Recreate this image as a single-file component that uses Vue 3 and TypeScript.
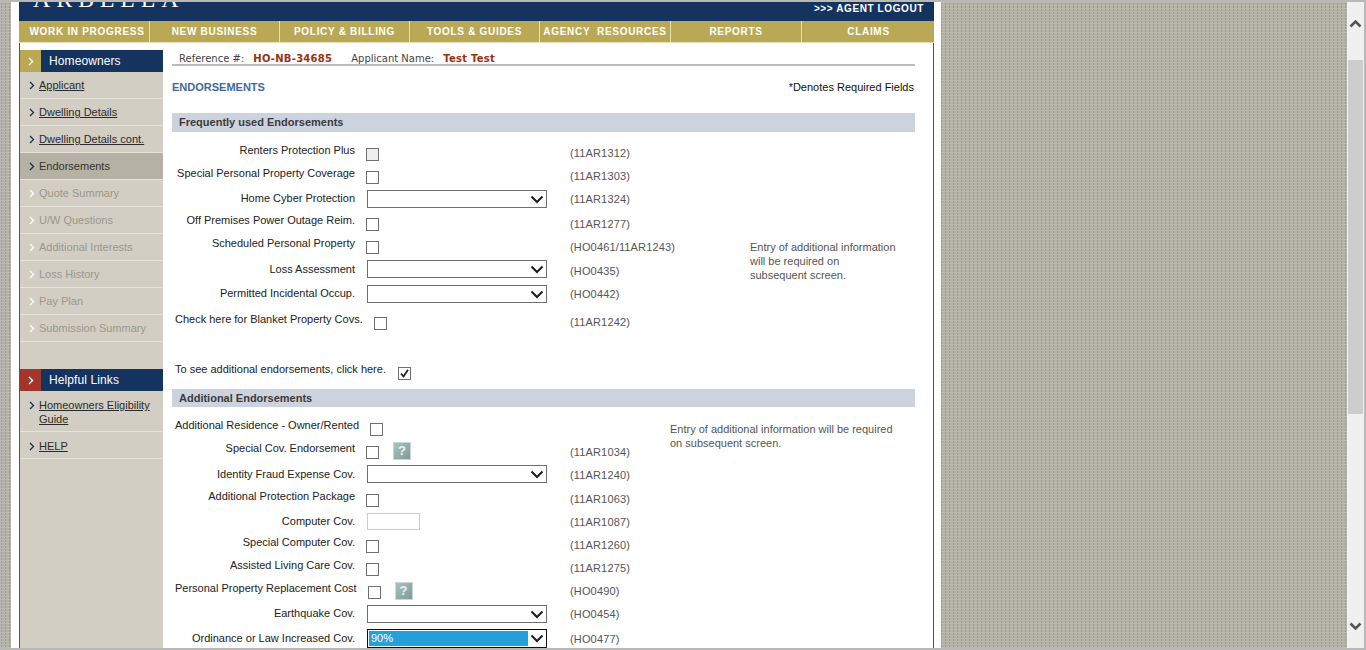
<script setup lang="ts">
interface Row {
  label: string
  type: 'check' | 'select' | 'text' | 'none'
  code?: string
  h: number
  ctrlTop?: number
  codeTop?: number
  wide?: boolean
  help?: boolean
  disabled?: boolean
  checked?: boolean
  value?: string
  focus?: boolean
}

const navItems = ['WORK IN PROGRESS', 'NEW BUSINESS', 'POLICY & BILLING', 'TOOLS & GUIDES', 'AGENCY  RESOURCES', 'REPORTS', 'CLAIMS']

const sideItems = [
  { text: 'Applicant', link: true },
  { text: 'Dwelling Details', link: true },
  { text: 'Dwelling Details cont.', link: true },
  { text: 'Endorsements', active: true },
  { text: 'Quote Summary', off: true },
  { text: 'U/W Questions', off: true },
  { text: 'Additional Interests', off: true },
  { text: 'Loss History', off: true },
  { text: 'Pay Plan', off: true },
  { text: 'Submission Summary', off: true }
]

const frequent: Row[] = [
  { label: 'Renters Protection Plus', type: 'check', code: '(11AR1312)', h: 23, codeTop: 3, disabled: true },
  { label: 'Special Personal Property Coverage', type: 'check', code: '(11AR1303)', h: 25, codeTop: 3 },
  { label: 'Home Cyber Protection', type: 'select', code: '(11AR1324)', h: 22, ctrlTop: -1, codeTop: 1 },
  { label: 'Off Premises Power Outage Reim.', type: 'check', code: '(11AR1277)', h: 23, codeTop: 4 },
  { label: 'Scheduled Personal Property', type: 'check', code: '(HO0461/11AR1243)', h: 26, codeTop: 4 },
  { label: 'Loss Assessment', type: 'select', code: '(HO0435)', h: 24, ctrlTop: -2, codeTop: 2 },
  { label: 'Permitted Incidental Occup.', type: 'select', code: '(HO0442)', h: 26, ctrlTop: -1, codeTop: 1 },
  { label: 'Check here for Blanket Property Covs.', type: 'check', code: '(11AR1242)', h: 50, codeTop: 3, wide: true },
  { label: 'To see additional endorsements, click here.', type: 'check', h: 27, wide: true, checked: true }
]

const additional: Row[] = [
  { label: 'Additional Residence - Owner/Rented', type: 'check', h: 23, wide: true },
  { label: 'Special Cov. Endorsement', type: 'check', code: '(11AR1034)', h: 26, codeTop: 4, help: true },
  { label: 'Identity Fraud Expense Cov.', type: 'select', code: '(11AR1240)', h: 22, ctrlTop: -2, codeTop: 1 },
  { label: 'Additional Protection Package', type: 'check', code: '(11AR1063)', h: 25, codeTop: 3 },
  { label: 'Computer Cov.', type: 'text', code: '(11AR1087)', h: 21, ctrlTop: -1, codeTop: 1 },
  { label: 'Special Computer Cov.', type: 'check', code: '(11AR1260)', h: 23, codeTop: 3 },
  { label: 'Assisted Living Care Cov.', type: 'check', code: '(11AR1275)', h: 23, codeTop: 3 },
  { label: 'Personal Property Replacement Cost', type: 'check', code: '(HO0490)', h: 25, codeTop: 3, wide: true, help: true },
  { label: 'Earthquake Cov.', type: 'select', code: '(HO0454)', h: 25, ctrlTop: -1, codeTop: 1 },
  { label: 'Ordinance or Law Increased Cov.', type: 'select', code: '(HO0477)', h: 25, ctrlTop: -2, codeTop: 1, value: '90%', focus: true }
]

const sections = [
  { title: 'Frequently used Endorsements', rows: frequent, cls: 'freq', note: 'Entry of additional information will be required on subsequent screen.' },
  { title: 'Additional Endorsements', rows: additional, cls: 'addl', note: 'Entry of additional information will be required on subsequent screen.' }
]
</script>

<template>
  <div class="frame">
    <div class="viewport">
      <div class="page">
        <header class="masthead">
          <div class="logo">ARBELLA</div>
          <a class="logout">&gt;&gt;&gt; AGENT LOGOUT</a>
        </header>
        <nav class="topnav">
          <a v-for="n in navItems" :key="n">{{ n }}</a>
        </nav>
        <div class="body">
          <aside class="side">
            <div class="side-head">
              <span class="tab gold">
                <svg width="6" height="9" viewBox="0 0 6 9"><path d="M1 1l3.5 3.5L1 8" fill="none" stroke="#fff" stroke-width="1.4" /></svg>
              </span>
              <span class="head-text">Homeowners</span>
            </div>
            <ul>
              <li v-for="s in sideItems" :key="s.text" :class="{ active: s.active, off: s.off }">
                <svg width="6" height="9" viewBox="0 0 6 9"><path d="M1 1l3.5 3.5L1 8" fill="none" :stroke="s.off ? '#fff' : '#14305c'" stroke-width="1.3" /></svg>
                <a :class="{ link: s.link }">{{ s.text }}</a>
              </li>
            </ul>
            <div class="side-head second">
              <span class="tab red">
                <svg width="6" height="9" viewBox="0 0 6 9"><path d="M1 1l3.5 3.5L1 8" fill="none" stroke="#fff" stroke-width="1.4" /></svg>
              </span>
              <span class="head-text">Helpful Links</span>
            </div>
            <ul class="help-links">
              <li>
                <svg width="6" height="9" viewBox="0 0 6 9"><path d="M1 1l3.5 3.5L1 8" fill="none" stroke="#14305c" stroke-width="1.3" /></svg>
                <a class="link">Homeowners Eligibility Guide</a>
              </li>
              <li>
                <svg width="6" height="9" viewBox="0 0 6 9"><path d="M1 1l3.5 3.5L1 8" fill="none" stroke="#14305c" stroke-width="1.3" /></svg>
                <a class="link">HELP</a>
              </li>
            </ul>
          </aside>

          <main class="main">
            <div class="refbar">
              <span>Reference #:</span><b class="ref">HO-NB-34685</b>
              <span class="app">Applicant Name:</span><b class="ref">Test Test</b>
            </div>
            <div class="title-row">
              <h1>ENDORSEMENTS</h1>
              <span class="req">*Denotes Required Fields</span>
            </div>

            <section v-for="sec in sections" :key="sec.title" :class="sec.cls">
              <h2>{{ sec.title }}</h2>
              <div class="sec-body">
                <div class="rows">
                  <div v-for="r in sec.rows" :key="r.label" class="row" :style="{ height: r.h + 'px' }">
                    <div class="cell">
                      <label :class="{ wide: r.wide, far: r.checked }">{{ r.label }}</label>
                      <div class="ctrl" :style="r.ctrlTop !== undefined ? { marginTop: r.ctrlTop + 'px' } : undefined">
                        <span v-if="r.type === 'check'" class="cb" :class="{ dis: r.disabled }">
                          <svg v-if="r.checked" width="11" height="11" viewBox="0 0 11 11"><path d="M2 5.5l2.5 3L9 1.8" fill="none" stroke="#222" stroke-width="1.8" /></svg>
                        </span>
                        <div v-else-if="r.type === 'select'" class="sel" :class="{ focus: r.focus }">
                          <span class="val">{{ r.value }}</span>
                          <svg width="14" height="9" viewBox="0 0 14 9"><path d="M1.5 1.5L7 7l5.5-5.5" fill="none" stroke="#1a1a2a" stroke-width="2" /></svg>
                        </div>
                        <span v-else-if="r.type === 'text'" class="txt"></span>
                        <span v-if="r.help" class="q">?</span>
                      </div>
                    </div>
                    <span v-if="r.code" class="code" :style="{ paddingTop: (r.codeTop ?? 0) + 'px' }">{{ r.code }}</span>
                  </div>
                </div>
                <p class="note">{{ sec.note }}</p>
              </div>
            </section>
          </main>
        </div>
      </div>
    </div>
    <div class="scrollbar">
      <svg class="arrow up" width="13" height="9" viewBox="0 0 13 9"><path d="M1.5 7.5l5-5 5 5" fill="none" stroke="#555" stroke-width="2.6" /></svg>
      <div class="thumb"></div>
      <svg class="arrow down" width="13" height="9" viewBox="0 0 13 9"><path d="M1.5 1.5l5 5 5-5" fill="none" stroke="#555" stroke-width="2.6" /></svg>
    </div>
  </div>
</template>

<style>
html,
body {
  margin: 0;
  overflow: hidden;
}
</style>

<style scoped>
.frame {
  box-sizing: border-box;
  width: 1366px;
  height: 650px;
  display: flex;
  border-top: 2px solid #b8b8b8;
  border-bottom: 2px solid #b8b8b8;
  border-left: 1px solid #b8b8b8;
  border-right: 2px solid #b8b8b8;
  overflow: hidden;
  font-family: "Liberation Sans", Arial, sans-serif;
  font-size: 11px;
  color: #222;
}

.viewport {
  flex: 1;
  overflow: hidden;
  background-color: #b3b3a7;
  background-image:
    repeating-linear-gradient(0deg, #b9b9ad 0 1px, transparent 1px 3px),
    repeating-linear-gradient(90deg, #9a9a90 0 1px, transparent 1px 4px);
}

.page {
  box-sizing: border-box;
  width: 930px;
  margin-left: 10px;
  padding: 0 7px 0 9px;
  background: #fff;
  min-height: 100%;
}

.masthead {
  box-sizing: border-box;
  width: 915px;
  height: 19px;
  margin-left: -1px;
  background: #14345f;
  display: flex;
  justify-content: space-between;
  overflow: hidden;
}

.logo {
  margin: -15px 0 0 14px;
  font-family: "Liberation Serif", serif;
  font-size: 24px;
  line-height: 24px;
  letter-spacing: 5.8px;
  color: #fff;
}

.logout {
  margin: 0 10px 0 0;
  font-weight: bold;
  font-size: 10px;
  line-height: 13px;
  letter-spacing: 0.6px;
  color: #fff;
  white-space: pre;
}

.topnav {
  width: 915px;
  height: 21px;
  margin-left: -1px;
  display: flex;
  background: #bba855;
  border-bottom: 1px solid #e6dfbb;
}

.topnav a {
  box-sizing: border-box;
  flex: 0 0 130px;
  text-align: center;
  font-weight: bold;
  font-size: 10px;
  line-height: 21px;
  letter-spacing: 0.7px;
  color: #fff;
  border-right: 1px solid #e6dfbb;
  white-space: pre;
}

.topnav a:first-child,
.topnav a:nth-child(5),
.topnav a:nth-child(6) {
  flex-basis: 131px;
}

.topnav a:first-child {
  padding-left: 6px;
}

.topnav a:last-child {
  flex-basis: 133px;
  border-right: 0;
}

.body {
  box-sizing: border-box;
  width: 915px;
  display: flex;
  align-items: stretch;
  border-left: 1px solid #55554f;
  border-right: 1px solid #55554f;
  margin-left: -1px;
}

.side {
  flex: 0 0 143px;
  margin-top: 7px;
  background: #d2cec3;
  height: 640px;
}

.side ul {
  list-style: none;
  margin: 0;
  padding: 0;
}

.side-head {
  display: flex;
  height: 22px;
  background: #14345f;
  color: #fff;
  font-size: 12px;
  letter-spacing: 0.1px;
  line-height: 22px;
}

.side-head.second {
  margin-top: 27px;
}

.tab {
  flex: 0 0 21px;
  display: flex;
  align-items: center;
  padding-left: 8px;
  box-sizing: border-box;
}

.tab.gold {
  background: #bba855;
}

.tab.red {
  background: #a4352a;
}

.head-text {
  margin-left: 8px;
}

.side li {
  box-sizing: border-box;
  display: flex;
  align-items: flex-start;
  gap: 4px;
  height: 27px;
  padding: 6px 8px 0 9px;
  border-bottom: 1px solid #e6e3da;
  line-height: 14px;
  color: #333;
}

.side li svg {
  flex: none;
  margin-top: 3px;
}

.side li.active {
  background: #b5b1a4;
}

.side li.off {
  color: #9a978d;
}

.side .link {
  color: #2b2b2b;
  text-decoration: underline;
}

.help-links li {
  padding-top: 7px;
}

.help-links li:first-child {
  height: 41px;
}

.main {
  flex: 0 0 743px;
  margin-left: 9px;
}

.refbar {
  box-sizing: border-box;
  height: 16px;
  margin-top: 7px;
  padding-left: 7px;
  border-bottom: 2px solid #bbb;
  font-family: "DejaVu Sans", Verdana, sans-serif;
  font-size: 10px;
  line-height: 17px;
  color: #444;
  white-space: nowrap;
}

.ref {
  margin-left: 9px;
  letter-spacing: 0.25px;
  color: #9c2f12;
}

.app {
  margin-left: 19px;
}

.title-row {
  height: 47px;
  display: flex;
  justify-content: space-between;
  align-items: flex-start;
}

h1 {
  margin: 14px 0 0;
  font-size: 11px;
  line-height: 14px;
  color: #3f6a9c;
}

.req {
  margin: 14px 1px 0 0;
  color: #111;
  line-height: 14px;
}

h2 {
  margin: 0;
  padding-left: 7px;
  height: 19px;
  background: #cdd3de;
  font-size: 11px;
  line-height: 19px;
  color: #3a3a3a;
}

.addl h2 {
  height: 18px;
  line-height: 18px;
}

.sec-body {
  display: flex;
  padding-top: 11px;
  align-items: flex-start;
}

.freq .rows {
  flex: 0 0 578px;
}

.addl .rows {
  flex: 0 0 498px;
}

.row {
  display: flex;
}

.cell {
  flex: 0 0 398px;
  display: flex;
  align-items: flex-start;
}

label {
  flex: 0 0 183px;
  text-align: right;
  line-height: 14px;
  white-space: nowrap;
}

label.wide {
  flex: none;
  margin-left: 3px;
  text-align: left;
}

label.far {
  margin-right: 1px;
}

.ctrl {
  display: flex;
  align-items: flex-start;
  margin-left: 11px;
  margin-top: 5px;
}

.cb {
  box-sizing: border-box;
  width: 13px;
  height: 13px;
  border: 1px solid #6f6f6f;
  background: #fff;
  display: flex;
  align-items: center;
  justify-content: center;
}

.cb.dis {
  background: #eee;
}

.sel {
  box-sizing: border-box;
  width: 180px;
  height: 18px;
  margin-left: 1px;
  border: 1px solid #6f6f6f;
  background: #fff;
  display: flex;
  align-items: center;
  justify-content: space-between;
  padding-right: 2px;
}

.sel svg {
  flex: none;
  margin-left: 2px;
}

.sel .val {
  height: 14px;
  line-height: 14px;
  padding-left: 2px;
  flex: 1;
}

.sel.focus {
  height: 19px;
  border-color: #111;
  padding: 1px 2px 1px 1px;
}

.sel.focus .val {
  background: #26a0da;
  color: #fff;
  height: 100%;
  margin-right: 0;
}

.txt {
  box-sizing: border-box;
  display: block;
  width: 53px;
  height: 17px;
  margin-left: 1px;
  border: 1px solid #ccc;
  background: #fff;
}

.q {
  box-sizing: border-box;
  width: 18px;
  height: 18px;
  margin: -4px 0 0 14px;
  background: linear-gradient(135deg, #a9c3bf, #7c9c98);
  border: 1px solid #c9d8d6;
  color: #eef3f2;
  font-size: 13px;
  font-weight: bold;
  line-height: 16px;
  text-align: center;
}

.code {
  color: #555;
  line-height: 14px;
  letter-spacing: 0.15px;
  white-space: nowrap;
}

.note {
  margin: 0;
  color: #555;
  line-height: 14px;
}

.freq .note {
  width: 148px;
  margin-top: 97px;
}

.addl .note {
  width: 235px;
  margin-top: 4px;
}

.scrollbar {
  position: relative;
  flex: 0 0 17px;
  background: #f0f0f0;
}

.thumb {
  position: absolute;
  left: 1px;
  right: 1px;
  top: 58px;
  height: 354px;
  background: #cdcdcd;
}

.arrow {
  position: absolute;
  left: 2px;
}

.arrow.up {
  top: 17px;
}

.arrow.down {
  bottom: 17px;
}
</style>
